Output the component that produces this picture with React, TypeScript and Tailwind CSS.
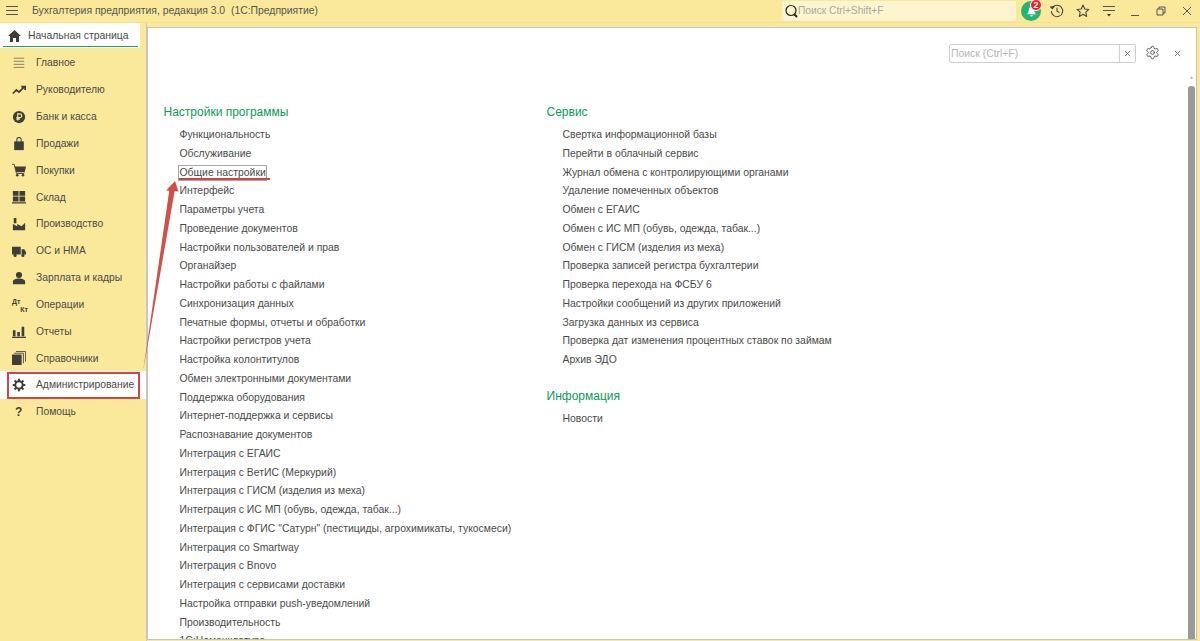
import React from "react";
import { Settings } from "lucide-react";

const nav: [string, React.ReactNode][] = [
  ["Главное", <svg viewBox="0 0 16 16" className="w-[14px] h-[14px]" fill="none" stroke="#77725a" strokeWidth="1"><path d="M2 2.500h12M2 6h12M2 9.500h12M2 13h12" /></svg>],
  ["Руководителю", <svg viewBox="0 0 16 16" className="w-[14px] h-[14px]" fill="none" stroke="#3f3f3a" strokeWidth="2"><path d="M1 12l4-4 3 2.500 6-6M10.500 4H15v4" /></svg>],
  ["Банк и касса", <svg viewBox="0 0 16 16" className="w-[14px] h-[14px]"><circle cx="8" cy="8" r="7" fill="#3f3f3a" /><path d="M6.500 12V4.500h2.500a2 2 0 010 4.200H5M5 10.500h4" fill="none" stroke="#fbe99b" strokeWidth="1.300" /></svg>],
  ["Продажи", <svg viewBox="0 0 16 16" className="w-[14px] h-[14px]"><path d="M2.500 5h11v10h-11z" fill="#3f3f3a" /><path d="M5.500 7V3a2.500 2.500 0 015 0v4" fill="none" stroke="#3f3f3a" strokeWidth="1.200" /></svg>],
  ["Покупки", <svg viewBox="0 0 16 16" className="w-[14px] h-[14px]"><path d="M3 4H16l-1.500 6.500H5z" fill="#3f3f3a" /><path d="M0 1.500h2.500l2.500 10.500h9" fill="none" stroke="#3f3f3a" /><circle cx="6" cy="14" r="1.500" fill="#3f3f3a" /><circle cx="12.500" cy="14" r="1.500" fill="#3f3f3a" /></svg>],
  ["Склад", <svg viewBox="0 0 16 16" className="w-[14px] h-[14px]" fill="#3f3f3a"><path d="M1 1h6.500v5.500H1zM8.500 1H15v5.500H8.500zM1 7.500h6.500V13H1zM8.500 7.500H15V13H8.500zM0 14h16v1.500H0z" /></svg>],
  ["Производство", <svg viewBox="0 0 16 16" className="w-[14px] h-[14px]" fill="#3f3f3a"><path d="M1 15V8l5 2.500V8l5 2.500 4-4V15zM2 1h3v6H2z" /></svg>],
  ["ОС и НМА", <svg viewBox="0 0 16 16" className="w-[14px] h-[14px]" fill="#3f3f3a"><path d="M0 3h10v9H0zM11 6h3l2 3v3h-5z" /><circle cx="3.500" cy="13" r="1.800" /><circle cx="12.500" cy="13" r="1.800" /></svg>],
  ["Зарплата и кадры", <svg viewBox="0 0 16 16" className="w-[14px] h-[14px]" fill="#3f3f3a"><circle cx="8" cy="4.500" r="3.500" /><path d="M1 15v-3c0-2 3-3.500 7-3.500s7 1.500 7 3.500v3z" /></svg>],
  ["Операции", <span className="block w-[14px] h-[14px] relative text-[7px] leading-none font-bold text-[#3f3f3a]"><span className="absolute left-0 top-0">Дт</span><span className="absolute right-[-2px] bottom-[-1px]">Кт</span></span>],
  ["Отчеты", <svg viewBox="0 0 16 16" className="w-[14px] h-[14px]" fill="#3f3f3a"><path d="M1 7h3v7H1zM6 9h3v5H6zM11 3h3v11h-3zM0 14.500h16V16H0z" /></svg>],
  ["Справочники", <svg viewBox="0 0 16 16" className="w-[14px] h-[14px]" fill="#3f3f3a"><path d="M0 4h11v12H0z" /><path d="M2.500 2.500H13V14" fill="none" stroke="#3f3f3a" /><path d="M4.500 0.500H15.500V12" fill="none" stroke="#3f3f3a" /></svg>],
];

const left = ["Функциональность","Обслуживание","Общие настройки","Интерфейс","Параметры учета","Проведение документов","Настройки пользователей и прав","Органайзер","Настройки работы с файлами","Синхронизация данных","Печатные формы, отчеты и обработки","Настройки регистров учета","Настройка колонтитулов","Обмен электронными документами","Поддержка оборудования","Интернет-поддержка и сервисы","Распознавание документов","Интеграция с ЕГАИС","Интеграция с ВетИС (Меркурий)","Интеграция с ГИСМ (изделия из меха)","Интеграция с ИС МП (обувь, одежда, табак...)","Интеграция с ФГИС \"Сатурн\" (пестициды, агрохимикаты, тукосмеси)","Интеграция со Smartway","Интеграция с Bnovo","Интеграция с сервисами доставки","Настройка отправки push-уведомлений","Производительность","1С:Номенклатура"];
const right = ["Свертка информационной базы","Перейти в облачный сервис","Журнал обмена с контролирующими органами","Удаление помеченных объектов","Обмен с ЕГАИС","Обмен с ИС МП (обувь, одежда, табак...)","Обмен с ГИСМ (изделия из меха)","Проверка записей регистра бухгалтерии","Проверка перехода на ФСБУ 6","Настройки сообщений из других приложений","Загрузка данных из сервиса","Проверка дат изменения процентных ставок по займам","Архив ЭДО"];

const teeth = [0, 45, 90, 135, 180, 225, 270, 315];

function SolidGear() {
  return (
    <svg width="14" height="14" viewBox="0 0 16 16" fill="none">
      <circle cx="8" cy="8" r="4.200" stroke="#3a3a36" strokeWidth="2.200" />
      {teeth.map((a) => (
        <rect key={a} x="6.900" y="0.800" width="2.200" height="2.800" fill="#3a3a36" transform={`rotate(${a} 8 8)`} />
      ))}
    </svg>
  );
}

function Item({ children }: { children: React.ReactNode }) {
  return <div className="h-[18.75px] leading-[18.75px] pl-[16px] whitespace-nowrap">{children}</div>;
}

function Heading({ children, className }: { children: React.ReactNode; className?: string }) {
  return <h2 className={"text-[#0b9b59] text-[12px] leading-[20px] h-[20px] font-normal mb-[4px] " + (className ?? "")}>{children}</h2>;
}

export default function App() {
  return (
    <div className="relative w-[1200px] h-[641px] overflow-hidden bg-[#fbe99b] text-[#4a4a4a] text-[10.400px] font-['Liberation_Sans',Arial,sans-serif] flex flex-col">
      <header className="h-[23px] shrink-0 flex items-center bg-[#fbe99b] border-b border-[#f5e28f]">
        <div className="w-[32px] flex justify-center pr-[8px]">
          <svg width="12" height="10" viewBox="0 0 12 10" stroke="#555" strokeWidth="1"><path d="M0 .5h12M0 4.500h12M0 8.500h12" /></svg>
        </div>
        <span className="text-[#555] whitespace-nowrap">Бухгалтерия предприятия, редакция 3.0&nbsp; (1С:Предприятие)</span>
        <div className="ml-auto w-[234px] h-[20px] bg-[#fdf5cf] rounded-[2px] flex items-center pl-[2px] text-[#a8a8a0] text-[10.200px]">
          <svg width="14" height="14" viewBox="0 0 14 14" fill="none" stroke="#222" strokeWidth="1.200"><circle cx="7" cy="6.500" r="5" /><path d="M10.500 10.500l2.500 2.500" strokeWidth="2" /></svg>
          <span>Поиск Ctrl+Shift+F</span>
        </div>
        <div className="relative ml-[5px] w-[20px] h-[20px] rounded-full bg-[#22b573] flex items-center justify-center">
          <svg width="11" height="11" viewBox="0 0 12 12" fill="#fff"><path d="M6 1c-2 0-3 1.500-3 3.500 0 2.500-1.500 3.500-2 4.500h10c-.5-1-2-2-2-4.500C9 2.500 8 1 6 1zM4.500 10h3a1.500 1.500 0 01-3 0z" /></svg>
          <span className="absolute right-[-1px] top-[-2px] w-[12px] h-[12px] rounded-full bg-[#ee1c25] border border-white text-white text-[9px] font-bold leading-[10px] text-center">2</span>
        </div>
        <div className="ml-[8px] w-[16px] flex justify-center">
          <svg width="14" height="14" viewBox="0 0 16 16" fill="none" stroke="#444" strokeWidth="1.200"><path d="M2.500 4.500A6.500 6.500 0 111.500 8" /><path d="M.8 3.500l2 2 1.700-2.400z" fill="#444" /><path d="M8 4v4.300l2.800 1.500" /></svg>
        </div>
        <div className="ml-[10px] w-[16px] flex justify-center">
          <svg width="14" height="14" viewBox="0 0 16 16" fill="none" stroke="#444" strokeWidth="1.200" strokeLinejoin="round"><path d="M8 1.200l2 4.500 4.800.5-3.600 3.200 1 4.800L8 11.800l-4.200 2.400 1-4.800L1.200 6.200 6 5.700z" /></svg>
        </div>
        <div className="ml-[10px] w-[16px] flex justify-center">
          <svg width="12" height="13" viewBox="0 0 12 12" fill="none" stroke="#555" strokeWidth="1"><path d="M0 1h12M0 5h12" /><path d="M4 8.500h4L6 11z" fill="#333" stroke="none" /></svg>
        </div>
        <div className="ml-[10px] w-[16px] flex justify-center">
          <svg width="9" height="12" viewBox="0 0 9 12" stroke="#555" strokeWidth="1"><path d="M0 10.500h8" /></svg>
        </div>
        <div className="ml-[10px] w-[16px] flex justify-center">
          <svg width="10" height="10" viewBox="0 0 10 10" fill="none" stroke="#555" strokeWidth="1"><path d="M1 3h6v6H1zM3 3V1h6v6H7" /></svg>
        </div>
        <div className="ml-[11px] mr-[6px] w-[14px] flex justify-center">
          <svg width="10" height="10" viewBox="0 0 10 10" stroke="#555" strokeWidth="1"><path d="M1 1l8 8M9 1l-8 8" /></svg>
        </div>
      </header>

      <div className="flex flex-1 min-h-0">
        <aside className="w-[147px] shrink-0 border-r border-[#c9c9c0]">
          <div className="h-[25px] bg-white mr-[6px] relative flex items-center pl-[8px] text-[10.400px] whitespace-nowrap">
            <svg width="13" height="12" viewBox="0 0 13 12" fill="#3f3f3a"><path d="M6.500 0L13 6h-2v6H8V8H5v4H2V6H0z" /></svg>
            <span className="ml-[7px]">Начальная страница</span>
            <div className="absolute left-[3px] right-[2px] bottom-[1px] h-[1.500px] bg-[#1fa463]" />
          </div>
          <nav className="pt-[1.600px] text-[10.300px] whitespace-nowrap">
            {nav.map(([label, icon]) => (
              <div key={label} className="h-[26.850px] flex items-center pl-[12px]">
                <span className="w-[24px] shrink-0">{icon}</span>
                <span>{label}</span>
              </div>
            ))}
            <div className="h-[28px] bg-white flex items-center pl-[12px] -mt-px">
              <span className="w-[24px] shrink-0"><SolidGear /></span>
              <span>Администрирование</span>
            </div>
            <div className="h-[26.850px] flex items-center pl-[12px]">
              <span className="w-[24px] shrink-0 font-bold text-[12px] pl-[3px] text-[#3f3f3a]">?</span>
              <span>Помощь</span>
            </div>
          </nav>
        </aside>

        <main className="flex-1 min-w-0 pt-[4px] pr-[3px] pb-px flex flex-col">
          <div className="flex-1 min-h-0 bg-white border border-[#c4c4c4] relative overflow-hidden">
            <div className="flex justify-end items-start pt-[16px] pr-[15px]">
              <div className="w-[187px] h-[19px] border border-[#cfcfcf] rounded-[2px] flex items-center text-[#b5b5b5] pl-[1px]">
                <span className="flex-1">Поиск (Ctrl+F)</span>
                <span className="w-[16px] h-full border-l border-[#cfcfcf] flex items-center justify-center">
                  <svg width="7" height="7" viewBox="0 0 8 8" stroke="#666" strokeWidth="1"><path d="M1 1l6 6M7 1L1 7" /></svg>
                </span>
              </div>
              <div className="ml-[9px] mt-[1px]"><Settings size={15} color="#555" strokeWidth={1.500} /></div>
              <div className="ml-[14px] mt-[6px]">
                <svg width="7" height="7" viewBox="0 0 8 8" stroke="#666" strokeWidth="1"><path d="M1 1l6 6M7 1L1 7" /></svg>
              </div>
            </div>

            <div className="flex pl-[15.5px] pt-[39px]">
              <section className="w-[383px] shrink-0">
                <Heading>Настройки программы</Heading>
                {left.map((t) => t === "Общие настройки" ? (
                  <Item key={t}><span className="relative inline-block leading-[14px] -ml-px pl-px outline outline-[#a8a8a8] outline-1">{t}</span></Item>
                ) : <Item key={t}>{t}</Item>)}
              </section>
              <section>
                <Heading>Сервис</Heading>
                {right.map((t) => <Item key={t}>{t}</Item>)}
                <Heading className="mt-[16px]">Информация</Heading>
                <Item>Новости</Item>
              </section>
            </div>

            <div className="absolute right-[1px] top-[47px] bottom-0 w-[7px]">
              <div className="text-[#bbb] text-[5px] leading-[5px] text-center">▲</div>
              <div className="mt-[6px] h-full rounded-t-[3px] bg-[#9a9a9a]" />
            </div>
          </div>
        </main>
      </div>

      {/* annotations drawn over the page */}
      <div className="absolute left-[7px] top-[372px] w-[133px] h-[27px] border-[2px] border-[#d0454a]" />
      <div className="absolute left-[179px] top-[178px] w-[91px] h-[2px] bg-[#d0454a]" />
      <svg className="absolute left-0 top-0 pointer-events-none" width="1200" height="641" viewBox="0 0 1200 641">
        <path d="M143 372L169.500 189L175 189z" fill="#d0504a" />
        <path d="M175 181L166 190.500L178.500 191.500z" fill="#d0504a" />
      </svg>
    </div>
  );
}
